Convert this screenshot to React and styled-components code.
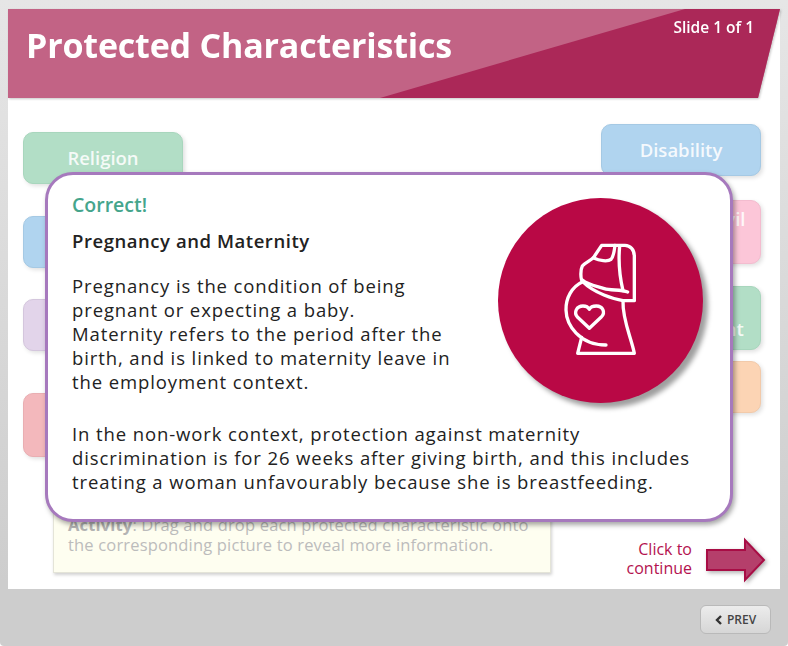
import React from "react";
import styled, { createGlobalStyle } from "styled-components";

const Global = createGlobalStyle`
  html, body { margin: 0; padding: 0; background: #fff; }
  #root { width: 788px; height: 646px; overflow: hidden; }
`;

const FONT = `"Open Sans", "Noto Sans", "Liberation Sans", sans-serif`;

const Page = styled.div`
  width: 788px;
  height: 646px;
  display: flex;
  flex-direction: column;
  font-family: ${FONT};
  background: linear-gradient(180deg, #e6e6e6 0%, #cdcdcd 90%);
  border-radius: 0 0 4px 4px;
  overflow: hidden;
`;

const Slide = styled.main`
  position: relative;
  margin: 9px 8px 0;
  width: 772px;
  height: 580px;
  background: #fff;
  display: flex;
  flex-direction: column;
`;

const HeaderShadow = styled.div`
  filter: drop-shadow(1px 1px 1px rgba(0, 0, 0, 0.22));
`;

const Header = styled.header`
  position: relative;
  height: 89px;
  background: #c26385;
  clip-path: polygon(0 0, 100% 0, 750px 100%, 0 100%);
  display: flex;
  justify-content: space-between;
  align-items: flex-start;

  &::before {
    content: "";
    position: absolute;
    inset: 0;
    background: #ab2858;
    clip-path: polygon(677px 0, 100% 0, 100% 100%, 372px 100%);
  }
`;

const Title = styled.h1`
  position: relative;
  margin: 12px 0 0 18px;
  font-size: 34px;
  line-height: 48px;
  font-weight: 700;
  color: #fff;
  letter-spacing: -0.18px;
`;

const SlideCount = styled.div`
  position: relative;
  margin: 8px 26px 0 0;
  font-size: 15.5px;
  line-height: 20px;
  font-weight: 600;
  color: #fff;
`;

const Board = styled.section`
  position: relative;
  flex: 1;
`;

const Token = styled.div`
  position: absolute;
  left: ${(p) => p.$x}px;
  top: ${(p) => p.$y}px;
  width: 160px;
  height: ${(p) => p.$h}px;
  box-sizing: border-box;
  padding: ${(p) => p.$pad || 0}px ${(p) => p.$right || 0}px 0 0;
  border-radius: 10px;
  background: ${(p) => p.$bg};
  border: 1px solid ${(p) => p.$line};
  box-shadow: 2px 2px 4px rgba(0, 0, 0, 0.12);
  color: rgba(255, 255, 255, 0.88);
  font-size: 18.5px;
  font-weight: 600;
  line-height: 24px;
  text-align: center;
`;

const BottomRow = styled.div`
  display: flex;
  justify-content: space-between;
  align-items: flex-end;
  padding: 0 12px 16px 45px;
`;

const Instruction = styled.div`
  width: 498px;
  height: 72px;
  box-sizing: border-box;
  padding: 13px 14px 0;
  background: #fefef0;
  border: 1px solid #e4e4d8;
  box-shadow: 1px 2px 3px rgba(0, 0, 0, 0.18);
  color: #bcbcbc;
  font-size: 16.5px;
  letter-spacing: 0.17px;
  line-height: 20px;
  b { font-weight: 700; color: #b4b4b4; }
`;

const Continue = styled.div`
  display: flex;
  align-items: center;
  gap: 14px;
  margin-bottom: -9px;
`;

const ContinueText = styled.div`
  width: 80px;
  margin-bottom: 3px;
  text-align: right;
  color: #b4124f;
  font-size: 16px;
  line-height: 19px;
`;

const ArrowIcon = styled.svg`
  display: block;
  width: 62px;
  height: 44px;
  overflow: visible;
  filter: drop-shadow(2px 2px 2px rgba(0, 0, 0, 0.3));
`;

const Footer = styled.footer`
  flex: 1;
  display: flex;
  justify-content: flex-end;
  align-items: flex-start;
  padding: 16px 17px 0 0;
`;

const PrevButton = styled.button`
  width: 71px;
  height: 29px;
  padding: 0;
  display: flex;
  align-items: center;
  justify-content: center;
  gap: 4px;
  border: 1px solid #b9b9b9;
  border-radius: 6px;
  background: linear-gradient(180deg, #ececec 0%, #d6d6d6 100%);
  color: #444;
  font-family: ${FONT};
  font-size: 12px;
  font-weight: 600;
`;

const Modal = styled.section`
  position: absolute;
  left: 37px;
  top: 163px;
  width: 688px;
  height: 350px;
  box-sizing: border-box;
  padding: 17px 24px 0;
  background: #fff;
  border: 3px solid #a679bd;
  border-radius: 28px;
  box-shadow: 2px 3px 5px rgba(0, 0, 0, 0.35);
  display: flex;
  flex-direction: column;
`;

const Correct = styled.div`
  color: #45a58c;
  font-size: 19.5px;
  line-height: 26px;
  font-weight: 600;
`;

const Heading = styled.div`
  margin-top: 11px;
  color: #222;
  font-size: 18.5px;
  letter-spacing: 0.55px;
  line-height: 24px;
  font-weight: 600;
`;

const TopPart = styled.div`
  display: flex;
  justify-content: space-between;
`;

const Body = styled.p`
  margin: ${(p) => p.$top}px 0 0;
  color: #222;
  font-size: 18.5px;
  letter-spacing: 0.89px;
  line-height: 24px;
  width: ${(p) => p.$w}px;
  white-space: nowrap;
`;

const Circle = styled.div`
  flex: none;
  width: 205px;
  height: 205px;
  margin: 6px 3px 0 0;
  border-radius: 50%;
  background: #b90845;
  box-shadow: 5px 5px 5px rgba(0, 0, 0, 0.38);
  display: flex;
  align-items: center;
  justify-content: center;
`;

const MotherIcon = () => (
  <svg width="100" height="141" viewBox="0 0 300 423" fill="none" stroke="#fff" strokeWidth="10" strokeLinecap="round" strokeLinejoin="round">
    <path d="M152 46H222C238 46 250 60 250 78V212H216C190 208 130 190 95 155C88 148 88 120 94 108C102 98 120 92 128 82Z" />
    <path d="M94 150C110 164 135 168 160 176C180 182 210 178 230 186" />
    <path d="M128 84C145 92 170 96 180 88C188 80 190 62 192 46" />
    <path d="M206 48C202 90 206 140 216 182" />
    <path d="M95 155C62 170 44 205 45 240C46 285 85 345 165 345" />
    <path d="M216 212C214 270 240 320 250 370H80L92 322" />
    <path d="M115 295L80 262C66 246 78 228 96 228C105 228 112 232 115 238C118 232 127 228 136 228C154 228 166 246 150 262Z" />
  </svg>
);

const tokens = [
  { x: 15, y: 34, h: 52, bg: "#b2dec6", line: "#a8d6bd", text: "Religion", pad: 13 },
  { x: 593, y: 26, h: 52, bg: "#b0d4ef", line: "#a5c9e4", text: "Disability", pad: 13 },
  { x: 15, y: 118, h: 52, bg: "#b0d4ef", line: "#a5c9e4", text: "" },
  { x: 15, y: 201, h: 52, bg: "#e2d4ea", line: "#d4c6dd", text: "" },
  { x: 15, y: 295, h: 64, bg: "#f3b8bc", line: "#e9aeb2", text: "" },
  { x: 593, y: 102, h: 64, bg: "#fcc6d8", line: "#f3bccf", text: "Marriage & Civil Partnership", pad: 6, right: 12 },
  { x: 593, y: 188, h: 64, bg: "#b2dec6", line: "#a8d6bd", text: "Gender Reassignment", pad: 6 },
  { x: 593, y: 263, h: 52, bg: "#fcd4b4", line: "#f2caaa", text: "" },
];

export default function App() {
  return (
    <Page>
      <Global />
      <Slide>
        <HeaderShadow>
          <Header>
            <Title>Protected Characteristics</Title>
            <SlideCount>Slide 1 of 1</SlideCount>
          </Header>
        </HeaderShadow>
        <Board>
          {tokens.map((t, i) => (
            <Token key={i} $x={t.x} $y={t.y} $h={t.h} $bg={t.bg} $line={t.line} $pad={t.pad} $right={t.right}>
              {t.text}
            </Token>
          ))}
        </Board>
        <BottomRow>
          <Instruction>
            <b>Activity</b>: Drag and drop each protected characteristic onto<br />
            the corresponding picture to reveal more information.
          </Instruction>
          <Continue>
            <ContinueText>Click to continue</ContinueText>
            <ArrowIcon viewBox="0 0 62 44">
              <path d="M1 12H39V2L58 22L39 42V32H1Z" fill="#b53f6b" stroke="#a80d45" strokeWidth="2" />
            </ArrowIcon>
          </Continue>
        </BottomRow>
        <Modal>
          <TopPart>
            <div>
              <Correct>Correct!</Correct>
              <Heading>Pregnancy and Maternity</Heading>
              <Body $top={21} $w={390}>
                Pregnancy is the condition of being<br />
                pregnant or expecting a baby.<br />
                Maternity refers to the period after the<br />
                birth, and is linked to maternity leave in<br />
                the employment context.
              </Body>
            </div>
            <Circle>
              <MotherIcon />
            </Circle>
          </TopPart>
          <Body $top={19} $w={630}>
            In the non-work context, protection against maternity<br />
            discrimination is for 26 weeks after giving birth, and this includes<br />
            treating a woman unfavourably because she is breastfeeding.
          </Body>
        </Modal>
      </Slide>
      <Footer>
        <PrevButton>
          <svg width="8" height="10" viewBox="0 0 8 10" fill="none" stroke="#333" strokeWidth="2.4"><path d="M6 1L2 5L6 9" /></svg>
          PREV
        </PrevButton>
      </Footer>
    </Page>
  );
}
